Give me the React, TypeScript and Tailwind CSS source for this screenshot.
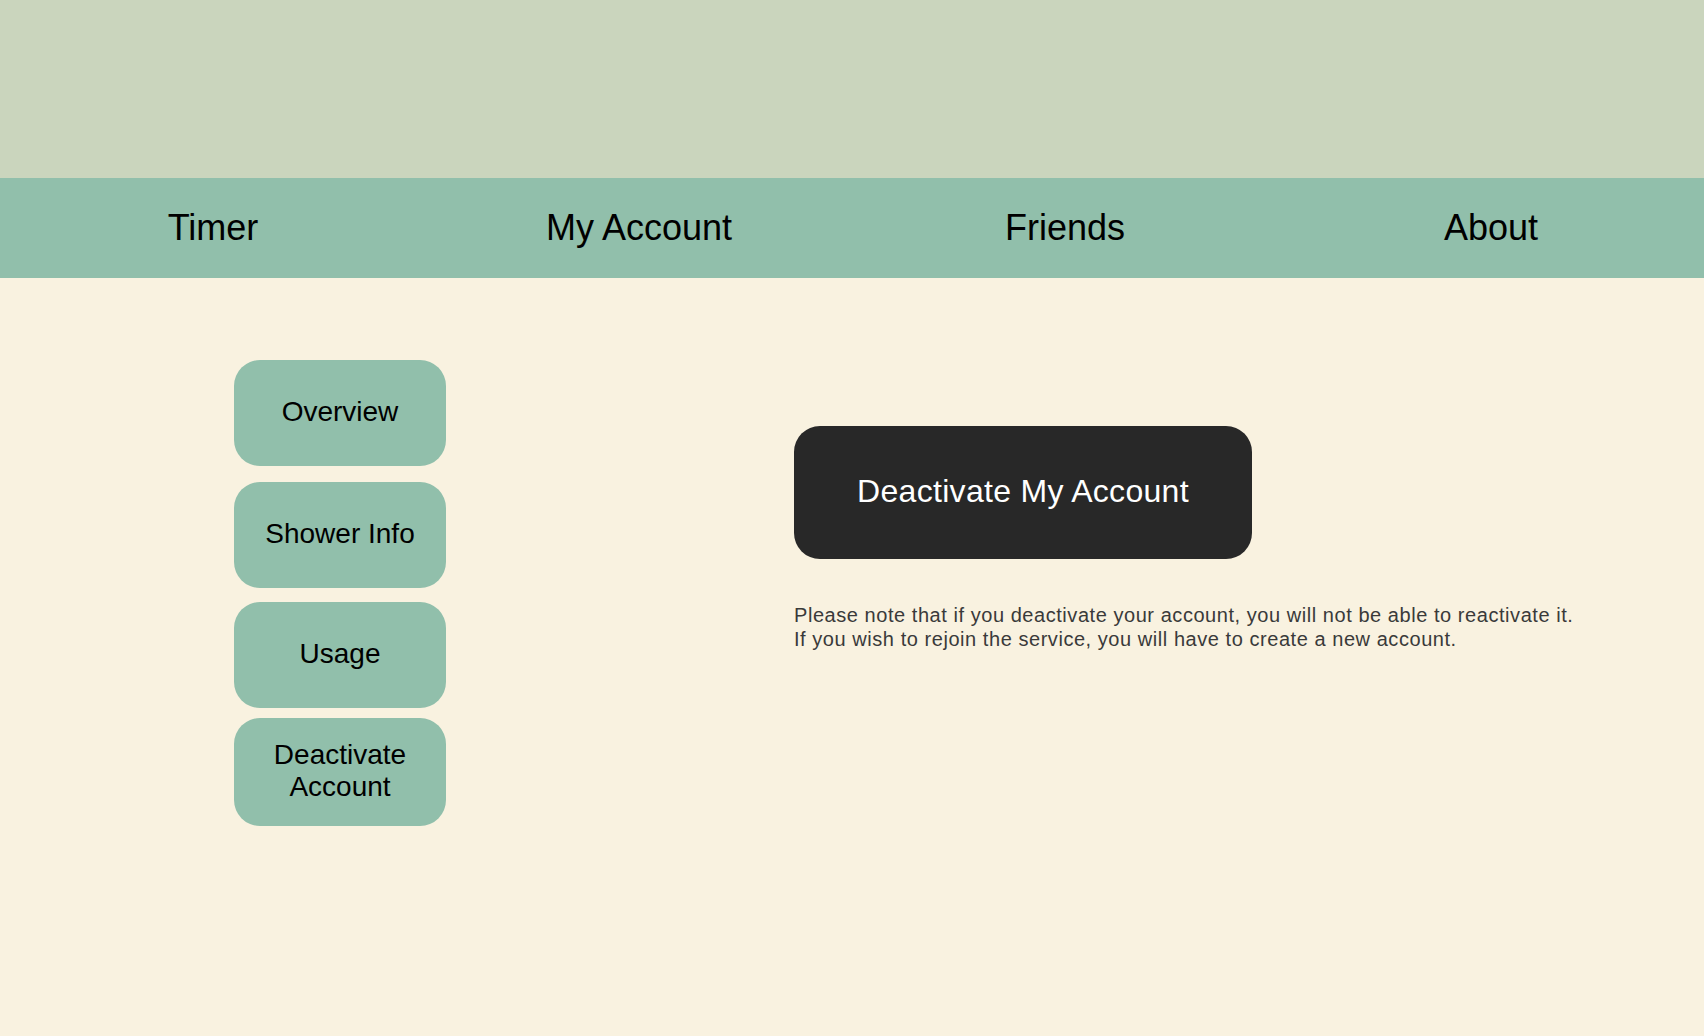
const navItems = ["Timer", "My Account", "Friends", "About"];

function SideButton({ children, className = "" }: { children: React.ReactNode; className?: string }) {
  return (
    <button
      className={`w-[212px] rounded-[26px] bg-[#91bfab] text-[28px] leading-[32px] text-black flex items-center justify-center text-center ${className}`}
    >
      {children}
    </button>
  );
}

export default function App() {
  return (
    <div
      className="min-h-screen w-full bg-[#f9f2e0]"
      style={{ fontFamily: '"Liberation Sans", Arial, sans-serif' }}
    >
      {/* Top banner */}
      <div className="h-[178px] bg-[#cad5bd]" />

      {/* Nav */}
      <nav className="h-[100px] bg-[#91bfab] grid grid-cols-4 items-center">
        {navItems.map((item) => (
          <div key={item} className="text-center text-[36px] leading-none text-black">
            {item}
          </div>
        ))}
      </nav>

      {/* Body */}
      <div className="flex pt-[82px]">
        {/* Sidebar */}
        <div className="ml-[234px] flex flex-col">
          <SideButton className="h-[106px] pb-[2px]">Overview</SideButton>
          <SideButton className="h-[106px] mt-[16px] pb-[2px]">Shower Info</SideButton>
          <SideButton className="h-[106px] mt-[14px] pb-[2px]">Usage</SideButton>
          <SideButton className="h-[108px] mt-[10px] pb-[2px]">
            Deactivate
            <br />
            Account
          </SideButton>
        </div>

        {/* Main */}
        <div className="ml-[348px] pt-[66px] flex flex-col">
          <button className="w-[458px] h-[133px] rounded-[26px] bg-[#282828] text-white text-[32px] leading-none tracking-[0.3px] pb-[4px]">
            Deactivate My Account
          </button>
          <p className="mt-[44px] text-[20px] leading-[24px] tracking-[0.55px] text-[#3a3a3a]">
            Please note that if you deactivate your account, you will not be able to reactivate it.
            <br />
            If you wish to rejoin the service, you will have to create a new account.
          </p>
        </div>
      </div>
    </div>
  );
}
